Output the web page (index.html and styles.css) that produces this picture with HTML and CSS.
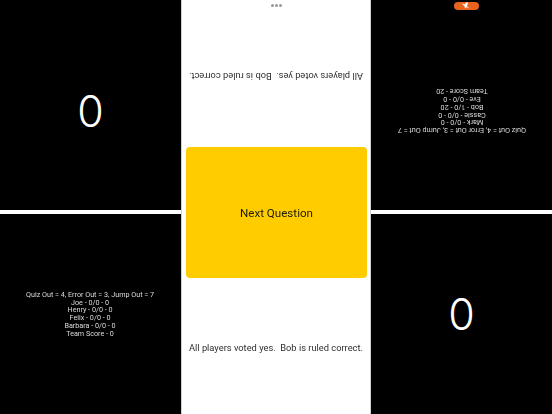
FILE: index.html
```html
<!DOCTYPE html>
<html lang="en">
<head>
<meta charset="utf-8">
<title>Quiz</title>
<link rel="stylesheet" href="styles.css">
</head>
<body>
<div class="app">
  <section class="side">
    <div class="panel flipped score-panel"><span class="score">0</span></div>
    <div class="panel players-panel">
      <div class="players">
        <div>Quiz Out = 4, Error Out = 3, Jump Out = 7</div>
        <div>Joe - 0/0 - 0</div>
        <div>Henry - 0/0 - 0</div>
        <div>Felix - 0/0 - 0</div>
        <div>Barbara - 0/0 - 0</div>
        <div>Team Score - 0</div>
      </div>
    </div>
  </section>
  <main class="center">
    <div class="message-area flipped"><p class="message">All players voted yes.&nbsp; Bob is ruled correct.</p></div>
    <button class="next"><span class="next-label">Next Question</span></button>
    <div class="message-area"><p class="message">All players voted yes.&nbsp; Bob is ruled correct.</p></div>
    <div class="dots"><i></i><i></i><i></i></div>
  </main>
  <section class="side">
    <div class="panel flipped players-panel">
      <div class="players">
        <div>Quiz Out = 4, Error Out = 3, Jump Out = 7</div>
        <div>Mark - 0/0 - 0</div>
        <div>Cassie - 0/0 - 0</div>
        <div>Bob - 1/0 - 20</div>
        <div>Eve - 0/0 - 0</div>
        <div>Team Score - 20</div>
      </div>
      <div class="pill">
        <svg width="9" height="7" viewBox="0 0 9 7"><path d="M1 0.500l3 2L3 6.500h2l1-2 2.500 1V4.500L6.500 3 6 0.500 4.500 1.800z" fill="#fff"/></svg>
      </div>
    </div>
    <div class="panel score-panel"><span class="score">0</span></div>
  </section>
</div>
</body>
</html>
```
FILE: styles.css
```css
* { box-sizing: border-box; }
html, body { margin: 0; height: 100%; }
body { background: #fff; font-family: Roboto, "Liberation Sans", sans-serif; overflow: hidden; }
.app { width: 552px; height: 414px; display: grid; grid-template-columns: 181px 190px 181px; }
.side { display: grid; grid-template-rows: 210px 200px; row-gap: 4px; }
.panel { background: #000; position: relative; display: flex; align-items: center; justify-content: center; }
.flipped.panel { padding-bottom: 11px; }
.flipped { transform: rotate(180deg); }
.score { color: #fff; font-size: 43px; line-height: 1; font-family: Inter, "Liberation Sans", sans-serif; font-weight: 300; }
.players { color: #dcdcdc; font-size: 7.200px; line-height: 7.7px; text-align: center; white-space: nowrap; will-change: transform; }
.center { position: relative; min-width: 0; background: #fff; border-left: 1px solid #d0d0d0; border-right: 1px solid #d0d0d0; display: grid; grid-template-columns: minmax(0, 1fr); grid-template-rows: 147px 131px 136px; padding: 0 3.5px 0 3.5px; }
.message-area { display: flex; align-items: center; justify-content: center; padding-top: 3px; min-width: 0; }
.flipped.message-area { padding: 0 0 6px; }
.message { margin: 0; font-size: 9.300px; color: #2e2e2e; white-space: nowrap; will-change: transform; }
.next { background: #ffcc00; border: 0; border-radius: 4px; color: #1c1c00; font: 11.600px Roboto, "Liberation Sans", sans-serif; padding: 0; }
.next-label { display: inline-block; will-change: transform; }
.dots { position: absolute; top: 4px; left: 0; right: 0; display: flex; justify-content: center; gap: 1px; }
.dots i { width: 3px; height: 3px; border-radius: 50%; background: #999; }
.pill { position: absolute; left: 73px; bottom: 2px; width: 25px; height: 8px; border-radius: 4px; background: #e8641e; display: flex; align-items: center; justify-content: center; }
```
